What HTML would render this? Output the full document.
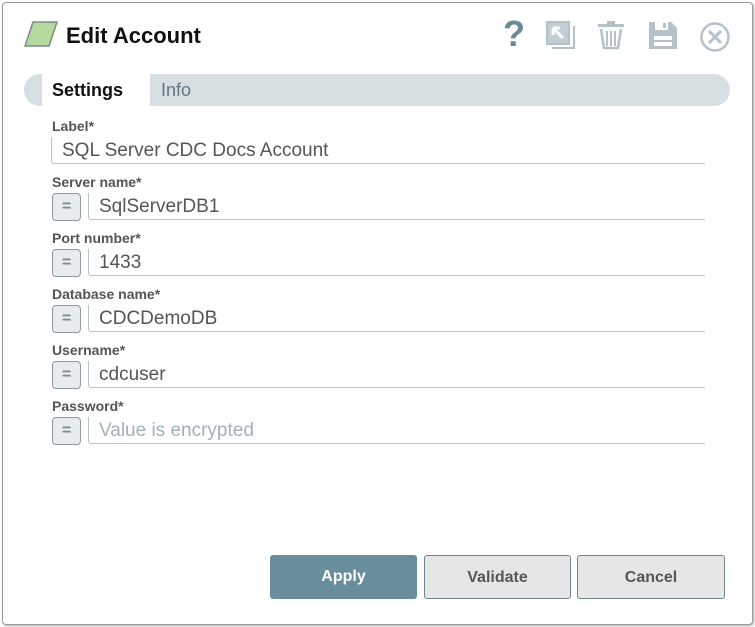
<!DOCTYPE html>
<html><head><style>
body{margin:0;width:755px;height:627px;background:#fff;font-family:"Liberation Sans",sans-serif;position:relative;overflow:hidden}
.dlg{position:absolute;left:2px;top:2px;width:749px;height:621px;border:1px solid #9a9a9a;border-radius:4px;box-shadow:1px 1px 2px #aaa}
.a{position:absolute}
.lbl{position:absolute;left:52px;font-size:14px;font-weight:bold;color:#555}
.inp{position:absolute;height:27px;border-left:1px solid #b8c4ca;border-bottom:1px solid #b8c4ca;border-radius:0 0 0 3px;font-size:19px;color:#555;line-height:27px;padding-left:10px;box-sizing:border-box}
.eq{position:absolute;left:52px;width:29px;height:28px;box-sizing:border-box;border:1px solid #8d9aa0;border-radius:4px;background:#e6ebee;color:#7a8a92;text-align:center;font-size:16px;line-height:26px;font-weight:bold}
.btn{position:absolute;top:555px;height:44px;box-sizing:border-box;border-radius:3px;font-size:16px;font-weight:bold;text-align:center;line-height:44px}
</style></head><body>
<div class="dlg"></div>
<svg class="a" style="left:23px;top:21px" width="36" height="26"><polygon points="10,1 34,1 26,25 2,25" fill="#b6d99d" stroke="#7f8a85" stroke-width="1.5"/></svg>
<div class="a" style="left:66px;top:23px;font-size:22px;font-weight:bold;color:#111">Edit Account</div>
<div class="a" style="left:503px;top:13px;font-size:36px;font-weight:bold;color:#6b8a99">?</div>
<svg class="a" style="left:545px;top:20px" width="32" height="32"><rect x="2" y="2" width="22" height="22" fill="#c3ced4" stroke="#b4c1c8" stroke-width="2"/><path d="M7 28 H29 V6" fill="none" stroke="#b4c1c8" stroke-width="2"/><path d="M8 8 L18 18 M8 8 H15 M8 8 V15" stroke="#fff" stroke-width="3" fill="none"/></svg>
<svg class="a" style="left:596px;top:20px" width="32" height="30"><rect x="2" y="4" width="26" height="3" fill="#b4c1c8"/><rect x="11" y="1" width="8" height="3" fill="#b4c1c8"/><path d="M5 9 L8 28 H22 L25 9" fill="none" stroke="#b4c1c8" stroke-width="2.5"/><path d="M11 11 V26 M15 11 V26 M19 11 V26" stroke="#b4c1c8" stroke-width="2"/></svg>
<svg class="a" style="left:647px;top:20px" width="32" height="30"><path d="M2 2 H24 L30 8 V29 H2 Z" fill="#b4c1c8"/><rect x="8" y="2" width="13" height="8" fill="#fff"/><rect x="16" y="3" width="3" height="5" fill="#b4c1c8"/><rect x="7" y="16" width="18" height="10" fill="#fff"/><rect x="7" y="20" width="18" height="2" fill="#b4c1c8"/></svg>
<svg class="a" style="left:699px;top:21px" width="32" height="32"><circle cx="16" cy="16" r="13.5" fill="none" stroke="#b4c1c8" stroke-width="2.5"/><path d="M10 10 L22 22 M22 10 L10 22" stroke="#b4c1c8" stroke-width="3"/></svg>
<div class="a" style="left:24px;top:74px;width:706px;height:32px;background:#d7dfe2;border-radius:16px"></div>
<div class="a" style="left:42px;top:74px;width:108px;height:32px;background:#fff"></div>
<div class="a" style="left:52px;top:80px;font-size:18px;font-weight:bold;color:#111">Settings</div>
<div class="a" style="left:161px;top:80px;font-size:18px;color:#5f7580">Info</div>
<div class="lbl" style="top:118px">Label*</div>
<div class="inp" style="left:51px;top:137px;width:654px">SQL Server CDC Docs Account</div>
<div class="lbl" style="top:174px">Server name*</div>
<div class="eq" style="top:193px">=</div><div class="inp" style="left:88px;top:193px;width:617px">SqlServerDB1</div>
<div class="lbl" style="top:230px">Port number*</div>
<div class="eq" style="top:249px">=</div><div class="inp" style="left:88px;top:249px;width:617px">1433</div>
<div class="lbl" style="top:286px">Database name*</div>
<div class="eq" style="top:305px">=</div><div class="inp" style="left:88px;top:305px;width:617px">CDCDemoDB</div>
<div class="lbl" style="top:342px">Username*</div>
<div class="eq" style="top:361px">=</div><div class="inp" style="left:88px;top:361px;width:617px">cdcuser</div>
<div class="lbl" style="top:398px">Password*</div>
<div class="eq" style="top:417px">=</div><div class="inp" style="left:88px;top:417px;width:617px;color:#a5b0b5">Value is encrypted</div>
<div class="btn" style="left:270px;width:147px;background:#688d9b;color:#fff">Apply</div>
<div class="btn" style="left:424px;width:147px;background:#e6e6e6;border:1px solid #6f8791;color:#555">Validate</div>
<div class="btn" style="left:577px;width:148px;background:#e6e6e6;border:1px solid #6f8791;color:#555">Cancel</div>
</body></html>
